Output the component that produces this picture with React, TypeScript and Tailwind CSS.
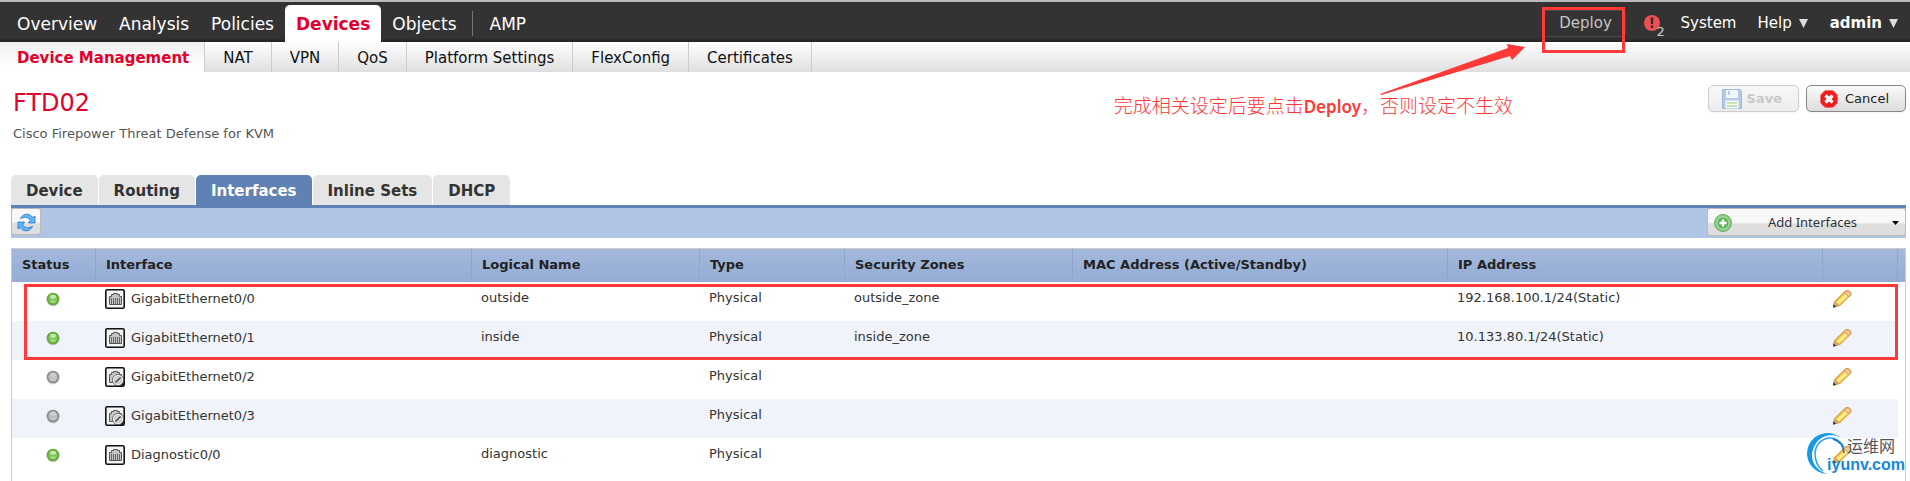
import { ReactNode } from "react";

type Iface = {
	name: string;
	enabled: boolean;
	up: boolean;
	logical?: string;
	zone?: string;
	ip?: string;
};

const mainNav = ["Overview", "Analysis", "Policies", "Devices", "Objects"];

const subNav = ["NAT", "VPN", "QoS", "Platform Settings", "FlexConfig", "Certificates"];

const tabs = ["Device", "Routing", "Interfaces", "Inline Sets", "DHCP"];

const columns = [
	{ label: "Status", width: "w-[84px]" },
	{ label: "Interface", width: "w-[376px]" },
	{ label: "Logical Name", width: "w-[228px]" },
	{ label: "Type", width: "w-[145px]" },
	{ label: "Security Zones", width: "w-[228px]" },
	{ label: "MAC Address (Active/Standby)", width: "w-[375px]" },
	{ label: "IP Address", width: "w-[375px]" },
	{ label: "", width: "w-[75px]" },
];

const interfaces: Iface[] = [
	{
		name: "GigabitEthernet0/0",
		enabled: true,
		up: true,
		logical: "outside",
		zone: "outside_zone",
		ip: "192.168.100.1/24(Static)",
	},
	{
		name: "GigabitEthernet0/1",
		enabled: true,
		up: true,
		logical: "inside",
		zone: "inside_zone",
		ip: "10.133.80.1/24(Static)",
	},
	{ name: "GigabitEthernet0/2", enabled: false, up: false },
	{ name: "GigabitEthernet0/3", enabled: false, up: false },
	{ name: "Diagnostic0/0", enabled: true, up: true, logical: "diagnostic" },
];

function StatusDot({ up }: { up: boolean }) {
	return (
		<svg className="mx-auto block h-4 w-4" viewBox="0 0 16 16">
			<circle cx="8" cy="9" r="6.5" fill="#000" opacity=".18" />
			<circle cx="8" cy="8" r="6.3" fill={up ? "#62a83a" : "#8c8c8c"} />
			<circle cx="8" cy="8" r="4.6" fill={up ? "#82c45a" : "#bdbdbd"} />
			<ellipse cx="8" cy="5.8" rx="3" ry="2" fill={up ? "#c4e8ac" : "#cecece"} />
			<ellipse cx="8" cy="10.6" rx="2.8" ry="1.4" fill={up ? "#a2dc7d" : "#c8c8c8"} />
		</svg>
	);
}

function PortIcon({ enabled }: { enabled: boolean }) {
	return (
		<svg className="h-5 w-5 shrink-0" viewBox="0 0 20 20">
			<rect x=".8" y=".8" width="18.4" height="18.4" rx="1.5" fill="#f4f4f4" stroke="#111" strokeWidth="1.6" />
			<path
				d="M4.500 15.500V7.500H6.500V5.500H8.500V4.500H12.500V5.500H14.500V7.500H16.500V15.500Z"
				fill="#c4c4c4"
				stroke="#555"
				strokeWidth="1"
			/>
			{enabled ? (
				<path d="M6.500 9V15M8.500 9V15M10.500 9V15M12.500 9V15M14.500 9V15" stroke="#666" strokeWidth="1" />
			) : (
				<>
					<path d="M19 10V19H10Z" fill="#222" />
					<circle cx="13" cy="13" r="5.6" fill="#f2f2f2" stroke="#555" strokeWidth=".8" />
					<circle cx="13" cy="13" r="3.6" fill="#d6d6d6" stroke="#aaa" strokeWidth=".6" />
					<path d="M10.400 15.600L15.600 10.400" stroke="#444" strokeWidth="1.400" />
				</>
			)}
		</svg>
	);
}

function PencilIcon() {
	return (
		<svg className="h-5 w-5" viewBox="0 0 20 20">
			<path d="M1 18.5L2 12.5L12.5 2.2Q14.5 .4 17 1.5Q19.8 3 19.3 6L8 17Z" fill="#d99c3a" />
			<path d="M3.2 13L12.8 3.6L17 7.4L7.2 16.6Z" fill="#f3c95a" />
			<path d="M5 13.3L13.4 5.2L15.4 7L7 15Z" fill="#fdf18a" />
			<path d="M12.8 3Q15 .8 17.4 2.2Q19.6 4 18.4 6.4L16.6 7.6L12.4 3.8Z" fill="#f2c9a0" stroke="#c98a4b" strokeWidth=".7" />
			<path d="M1 18.5L2 12.8L7.4 17Z" fill="#c9a878" />
			<path d="M1 18.6L1.4 15.3L4.4 17.9Z" fill="#3a3326" />
		</svg>
	);
}

function RefreshIcon() {
	return (
		<svg className="h-[19px] w-[19px]" viewBox="0 0 20 20" fill="#62b4f5" stroke="#2b7fd0" strokeWidth=".9">
			<path d="M3.500 6Q6 1 11 1.200Q14.500 1.500 16.300 4.500L19 3.500V10.500H12L14 7.500Q12 4.600 9 4.500Q6 4.500 3.500 6Z" />
			<path d="M16.500 14Q14 19 9 18.800Q5.500 18.500 3.700 15.500L1 16.500V9.500H8L6 12.500Q8 15.400 11 15.500Q14 15.500 16.500 14Z" />
		</svg>
	);
}

function SaveIcon() {
	return (
		<svg className="h-5 w-5" viewBox="0 0 20 20">
			<path d="M.5 .5H18L19.500 2V19.500H.5Z" fill="#b4cbea" stroke="#a0b8dc" />
			<rect x="4" y="1" width="12" height="8" fill="#f3f6fb" />
			<rect x="6" y="2" width="2" height="4" fill="#b4cbea" />
			<rect x="3.500" y="11.500" width="13" height="8" fill="#f7faf4" />
			<path d="M5 14H15M5 17H15" stroke="#c6e2ba" strokeWidth="1.800" />
		</svg>
	);
}

function CancelIcon() {
	return (
		<svg className="h-[18px] w-[18px]" viewBox="0 0 18 18">
			<path
				d="M6 .5H12Q13 .5 14 1.500L16.500 4Q17.500 5 17.500 6V12Q17.500 13 16.500 14L14 16.500Q13 17.500 12 17.500H6Q5 17.500 4 16.500L1.500 14Q.5 13 .5 12V6Q.5 5 1.500 4L4 1.500Q5 .5 6 .5Z"
				fill="#f31c1c"
				stroke="#e66"
				strokeWidth=".6"
			/>
			<path d="M5.500 5.500L12.500 12.500M12.500 5.500L5.500 12.500" stroke="#fff" strokeWidth="3.200" />
		</svg>
	);
}

function AddIcon() {
	return (
		<svg className="h-[18px] w-[18px]" viewBox="0 0 18 18">
			<circle cx="9" cy="9" r="8.500" fill="#8fcb89" stroke="#66ad61" />
			<circle cx="9" cy="9" r="6" fill="#5fb457" stroke="#b9e3b5" strokeWidth=".8" />
			<path d="M9 5.500V12.500M5.500 9H12.500" stroke="#fff" strokeWidth="2.400" />
		</svg>
	);
}

function AlertIcon() {
	return (
		<svg className="h-4 w-4" viewBox="0 0 16 16">
			<circle cx="8" cy="8" r="8" fill="#ee4f52" />
			<path d="M6.600 2.500H9.400L9 9H7Z" fill="#2d2d2d" />
			<rect x="6.800" y="10.400" width="2.400" height="2.600" fill="#2d2d2d" />
		</svg>
	);
}

function Caret() {
	return (
		<svg className="h-[9px] w-[9px]" viewBox="0 0 9 9">
			<path d="M0 0H9L4.500 9Z" fill="#ddd" />
		</svg>
	);
}

function MainNav() {
	return (
		<header className="relative flex h-10 items-end justify-between bg-linear-to-b from-[#333] from-90% to-[#222] text-white">
			<nav className="flex items-end text-[17px]">
				<div className="flex pl-[6px]">
					{mainNav.map((item) =>
						item === "Devices" ? (
							<a
								key={item}
								href="#"
								className="h-[37px] rounded-t-[5px] bg-white px-[11px] leading-[39px] font-bold text-[#e2002d]"
							>
								{item}
							</a>
						) : (
							<a key={item} href="#" className="h-[37px] px-[11px] leading-[39px]">
								{item}
							</a>
						)
					)}
				</div>
				<div className="mb-[6px] ml-1 h-[25px] border-l border-[#777]" />
				<a href="#" className="h-[37px] pl-[17px] leading-[39px]">
					AMP
				</a>
			</nav>
			<div className="flex h-10 items-center pt-[2px] pr-3 text-[15px]">
				<div className="relative">
					<button className="h-[27px] w-[84px] rounded border border-[#484848] pt-px pl-1 text-[#c4c4c4]">
						Deploy
					</button>
					<span className="pointer-events-none absolute -top-[3px] right-px left-0 h-[46px] border-3 border-[#ff3838]" />
				</div>
				<div className="relative ml-[18px]">
					<AlertIcon />
					<span className="absolute top-[9px] left-[13px] text-[13px] leading-4 text-[#ccc]">2</span>
				</div>
				<a href="#" className="ml-[21px]">
					System
				</a>
				<a href="#" className="ml-[21px] flex items-center gap-[7px]">
					Help <Caret />
				</a>
				<a href="#" className="ml-[22px] flex items-center gap-[7px] font-bold">
					admin <Caret />
				</a>
			</div>
		</header>
	);
}

function SubNav() {
	return (
		<nav className="flex h-[30px] bg-linear-to-b from-white to-[#dfdfdf] text-[15px] leading-8 text-[#111]">
			<a
				href="#"
				className="border-r border-[#ccc] bg-linear-to-b from-[#eee] to-white to-80% pr-[15px] pl-[17px] font-bold text-[#e2002d]"
			>
				Device Management
			</a>
			{subNav.map((item) => (
				<a key={item} href="#" className="border-r border-[#ccc] px-[18px]">
					{item}
				</a>
			))}
		</nav>
	);
}

// Red remark with the arrow that points at the Deploy button
function Remark() {
	return (
		<div className="pointer-events-none absolute top-[42px] right-[384px] text-[#ff3838]">
			<p
				lang="zh-CN"
				className="absolute top-[47px] right-[13px] font-['Noto_Sans_CJK_SC',sans-serif] text-[19px] leading-7 font-light whitespace-nowrap"
			>
				完成相关设定后要点击<b className="font-['Noto_Sans'] text-[17px] font-semibold">Deploy</b>
				，否则设定不生效
			</p>
			<svg className="h-[52px] w-[146px]" viewBox="0 0 146 52" fill="currentColor">
				<path d="M0 50L128 4L127 0L145 3L132 16L130 12L1 51Z" />
			</svg>
		</div>
	);
}

function ActionButton({ icon, disabled, children }: { icon: ReactNode; disabled?: boolean; children: ReactNode }) {
	return (
		<button
			disabled={disabled}
			className="flex h-[27px] items-center gap-[7px] rounded-[5px] border border-[#888] bg-linear-to-b from-[#fafafa] to-[#dcdcdc] px-[13px] text-[13px] text-[#222] shadow-xs disabled:gap-[5px] disabled:border-[#ccc] disabled:from-[#f8f8f8] disabled:to-[#ececec] disabled:font-bold disabled:text-[#c8c8c8]"
		>
			{icon}
			<span className="pr-[3px]">{children}</span>
		</button>
	);
}

function InterfaceTable() {
	return (
		<div className="relative flex-1 border border-b-0 border-[#ccc]">
			<table className="w-full table-fixed border-separate border-spacing-0 text-left text-[13px] text-[#333]">
				<thead>
					<tr className="h-[33px] bg-linear-to-b from-[#a4b8dc] to-[#93add4] text-[#222]">
						{columns.map((col) => (
							<th
								key={col.label}
								className={`${col.width} border-r border-[#8fa6cb] pb-[2px] pl-[10px] font-bold`}
							>
								{col.label}
							</th>
						))}
						<td className="w-[7px]" />
					</tr>
				</thead>
				<tbody>
					{interfaces.map((row, i) => (
						<tr key={row.name} className="h-[39px] align-top leading-8">
							<td className={i % 2 ? "bg-[#f0f3fa] pt-[9px] pr-[2px]" : "pt-[9px] pr-[2px]"}>
								<StatusDot up={row.up} />
							</td>
							<td className={i % 2 ? "bg-[#f0f3fa] pl-[9px]" : "pl-[9px]"}>
								<div className="flex items-center gap-[6px] pt-px">
									<PortIcon enabled={row.enabled} />
									{row.name}
								</div>
							</td>
							{[row.logical, "Physical", row.zone, "", row.ip].map((text, n) => (
								<td key={n} className={i % 2 ? "bg-[#f0f3fa] pl-[9px]" : "pl-[9px]"}>
									{text}
								</td>
							))}
							<td className={i % 2 ? "bg-[#f0f3fa] pt-[7px] pl-[9px]" : "pt-[7px] pl-[9px]"}>
								<button aria-label={`Edit ${row.name}`} className="block">
									<PencilIcon />
								</button>
							</td>
							<td />
						</tr>
					))}
				</tbody>
			</table>
			<div className="pointer-events-none absolute top-[35px] right-[7px] left-3 h-[76px] border-3 border-[#ff3838]" />
		</div>
	);
}

function SiteMark() {
	return (
		<div className="pointer-events-none absolute right-[5px] bottom-1 h-11 w-[100px]">
			<svg className="absolute top-0 left-0 h-11 w-11" viewBox="0 0 44 44">
				<path d="M37 6A20.500 20.500 0 1 0 22 41Q6 35 7 20Q11 3 26 2Q32 2 37 6Z" fill="#1599e6" />
				<path d="M39 14Q33 4 23 5Q11 8 10 20Q10 32 18 38" fill="none" stroke="#2aa6ee" strokeWidth="1.500" />
				<path d="M39 20Q38 9 28 6" fill="none" stroke="#1c6fc0" strokeWidth="1.500" />
			</svg>
			<div className="flex h-11 flex-col items-end justify-end pb-[2px]">
				<span
					lang="zh-CN"
					className="pr-[10px] font-['Noto_Sans_CJK_SC',sans-serif] text-base leading-5 whitespace-nowrap text-[#555]"
				>
					运维网
				</span>
				<span className="font-['Liberation_Sans'] text-base leading-5 font-bold text-[#1687dc]">iyunv.com</span>
			</div>
		</div>
	);
}

export default function App() {
	return (
		<div className="relative flex min-h-screen flex-col border-t-2 border-[#bbb] bg-white font-['DejaVu_Sans',sans-serif]">
			<MainNav />
			<SubNav />
			<Remark />
			<div className="flex justify-between pt-[13px] pr-1 pl-[13px]">
				<div>
					<h1 className="text-2xl leading-9 text-[#e2002d]">FTD02</h1>
					<p className="mt-[3px] text-[13px] leading-5 text-[#555]">Cisco Firepower Threat Defense for KVM</p>
				</div>
				<div className="flex gap-[7px]">
					<ActionButton icon={<SaveIcon />} disabled>
						Save
					</ActionButton>
					<ActionButton icon={<CancelIcon />}>Cancel</ActionButton>
				</div>
			</div>
			<main className="mt-[31px] flex flex-1 flex-col pr-1 pl-[11px]">
				<div role="tablist" className="flex gap-px border-b-3 border-[#5f81b3] text-[15px] font-bold">
					{tabs.map((tab) => (
						<button
							key={tab}
							role="tab"
							aria-selected={tab === "Interfaces"}
							className="h-[30px] rounded-t-[5px] bg-[#e5e5e5] px-[15px] pt-[2px] text-[#333] aria-selected:bg-[#5f81b3] aria-selected:text-white"
						>
							{tab}
						</button>
					))}
				</div>
				<div className="flex h-[30px] items-start justify-between bg-[#b0c5e4]">
					<button
						aria-label="Refresh"
						className="flex h-[27px] w-[30px] items-center justify-center rounded-[3px] border border-[#bbb] bg-linear-to-b from-[#f8f8f8] from-50% to-[#dedede] to-60% pt-px pl-px"
					>
						<RefreshIcon />
					</button>
					<button className="flex h-[28px] w-[199px] items-center rounded-[3px] border border-[#bbb] bg-linear-to-b from-[#f8f8f8] from-50% to-[#dedede] to-60% px-[6px] pt-[2px] text-left font-['Noto_Sans'] text-[13px] text-[#333]">
						<AddIcon />
						<span className="flex-1 pl-9">Add Interfaces</span>
						<svg className="h-1 w-[7px]" viewBox="0 0 7 4">
							<path d="M0 0H7L3.500 4Z" />
						</svg>
					</button>
				</div>
				<div className="mt-[10px] flex flex-1 flex-col">
					<InterfaceTable />
				</div>
			</main>
			<SiteMark />
		</div>
	);
}
